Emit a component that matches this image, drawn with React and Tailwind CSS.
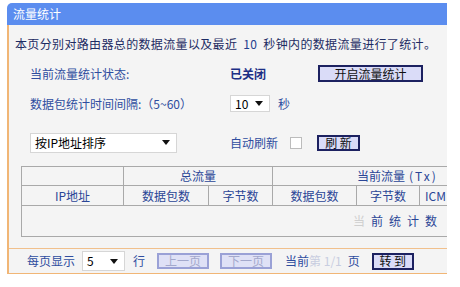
import React from "react";

function Select({ text, className }) {
  return (
    <div className={"flex items-center justify-between bg-white border border-[#d6d6d6] pl-[4px] pr-[6px] text-black " + className}>
      <span>{text}</span>
      <svg width="8" height="5" viewBox="0 0 8 5"><path d="M0 0h8L4 5z" fill="#111" /></svg>
    </div>
  );
}

function Btn({ children, className }) {
  return (
    <div className={"flex items-center justify-center border-2 border-[#1c2160] bg-[#dadcf8] text-[#111] " + className}>
      {children}
    </div>
  );
}

function DisBtn({ children }) {
  return (
    <div className="flex items-center justify-center w-[52px] h-[16px] border-2 border-[#9aa1d6] bg-[#dfe1f6] text-[#a3a8cc]">
      {children}
    </div>
  );
}

export default function App() {
  const cell = "border border-[#a9a9a9] text-center font-normal p-0";
  return (
    <div className="w-[460px] h-[287px] bg-white pl-[7px] pt-[3px] overflow-hidden font-['Noto_Sans_CJK_SC','Noto_Sans',sans-serif] text-[12px] leading-[16px]">
      <div className="w-[440px] h-[22px] bg-[#5b8def] rounded-tl-[5px] flex items-center pl-[6px] text-white">
        流量统计
      </div>
      <div className="w-[440px] flex flex-col bg-[#f4f4f4] border-l-2 border-b border-[#f1b676] overflow-hidden">
        <p className="mt-[11px] pl-[6px] whitespace-nowrap tracking-[0.35px] text-[#1d2c63]">
          本页分别对路由器总的数据流量以及最近<span className="mx-[6px] text-[#24408e]">10</span>秒钟内的数据流量进行了统计。
        </p>

        <div className="mt-[13px] h-[17px] flex items-center pl-[21px]">
          <span className="w-[200px] text-[#2f4d9f]">当前流量统计状态:</span>
          <span className="w-[88px] font-bold text-[#1d2f86]">已关闭</span>
          <Btn className="w-[105px] h-[17px]">开启流量统计</Btn>
        </div>

        <div className="mt-[13px] h-[17px] flex items-center pl-[21px]">
          <span className="w-[200px] text-[#2f4d9f]">数据包统计时间间隔:（5~60）</span>
          <Select text="10" className="w-[40px] h-[17px]" />
          <span className="ml-[8px] text-[#2f4d9f]">秒</span>
        </div>

        <div className="mt-[20px] h-[21px] flex items-center pl-[21px]">
          <div className="w-[200px]">
            <Select text="按IP地址排序" className="w-[147px] h-[20px]" />
          </div>
          <span className="w-[60px] text-[#2f4d9f]">自动刷新</span>
          <div className="w-[12px] h-[12px] border border-[#bcbcbc] bg-white" />
          <Btn className="ml-[15px] w-[43px] h-[16px]">刷 新</Btn>
        </div>

        <div className="mt-[13px] ml-[12px] w-[427px] overflow-hidden">
          <table className="border-collapse table-fixed w-[584px] text-[#2a4596]">
            <colgroup>
              <col className="w-[102px]" />
              <col className="w-[85px]" />
              <col className="w-[64px]" />
              <col className="w-[84px]" />
              <col className="w-[63px]" />
              <col className="w-[86px]" />
              <col className="w-[100px]" />
            </colgroup>
            <tbody>
              <tr className="h-[19px]">
                <td className={cell}></td>
                <td className={cell} colSpan={2}>总流量</td>
                <td className={cell + " text-left pl-[84px] whitespace-nowrap"} colSpan={3}>
                  当前流量<span className="ml-[4px] tracking-[2px]">(Tx)</span>
                </td>
                <td className={cell}></td>
              </tr>
              <tr className="h-[20px]">
                <td className={cell}>IP地址</td>
                <td className={cell}>数据包数</td>
                <td className={cell}>字节数</td>
                <td className={cell}>数据包数</td>
                <td className={cell}>字节数</td>
                <td className={cell + " text-left pl-[5px]"}>ICM</td>
                <td className={cell}></td>
              </tr>
              <tr className="h-[31px]">
                <td className={cell + " text-left pl-[331px] tracking-[6px]"} colSpan={7}>
                  <span className="text-[#cfcfcf]">当</span>前统计数
                </td>
              </tr>
            </tbody>
          </table>
        </div>

        <div className="mt-[11px] h-[25px] border-t border-[#f1c08c] flex items-center pl-[18px] text-[#2f4d9f]">
          <span>每页显示</span>
          <Select text="5" className="ml-[7px] w-[43px] h-[20px]" />
          <span className="ml-[8px]">行</span>
          <div className="ml-[12px]"><DisBtn>上一页</DisBtn></div>
          <div className="ml-[11px]"><DisBtn>下一页</DisBtn></div>
          <span className="ml-[13px]">当前</span>
          <span className="text-[#c8cde0]">第 1/1 </span>
          <span className="ml-[6px]">页</span>
          <Btn className="ml-[12px] w-[42px] h-[17px]">转 到</Btn>
        </div>
      </div>
    </div>
  );
}
